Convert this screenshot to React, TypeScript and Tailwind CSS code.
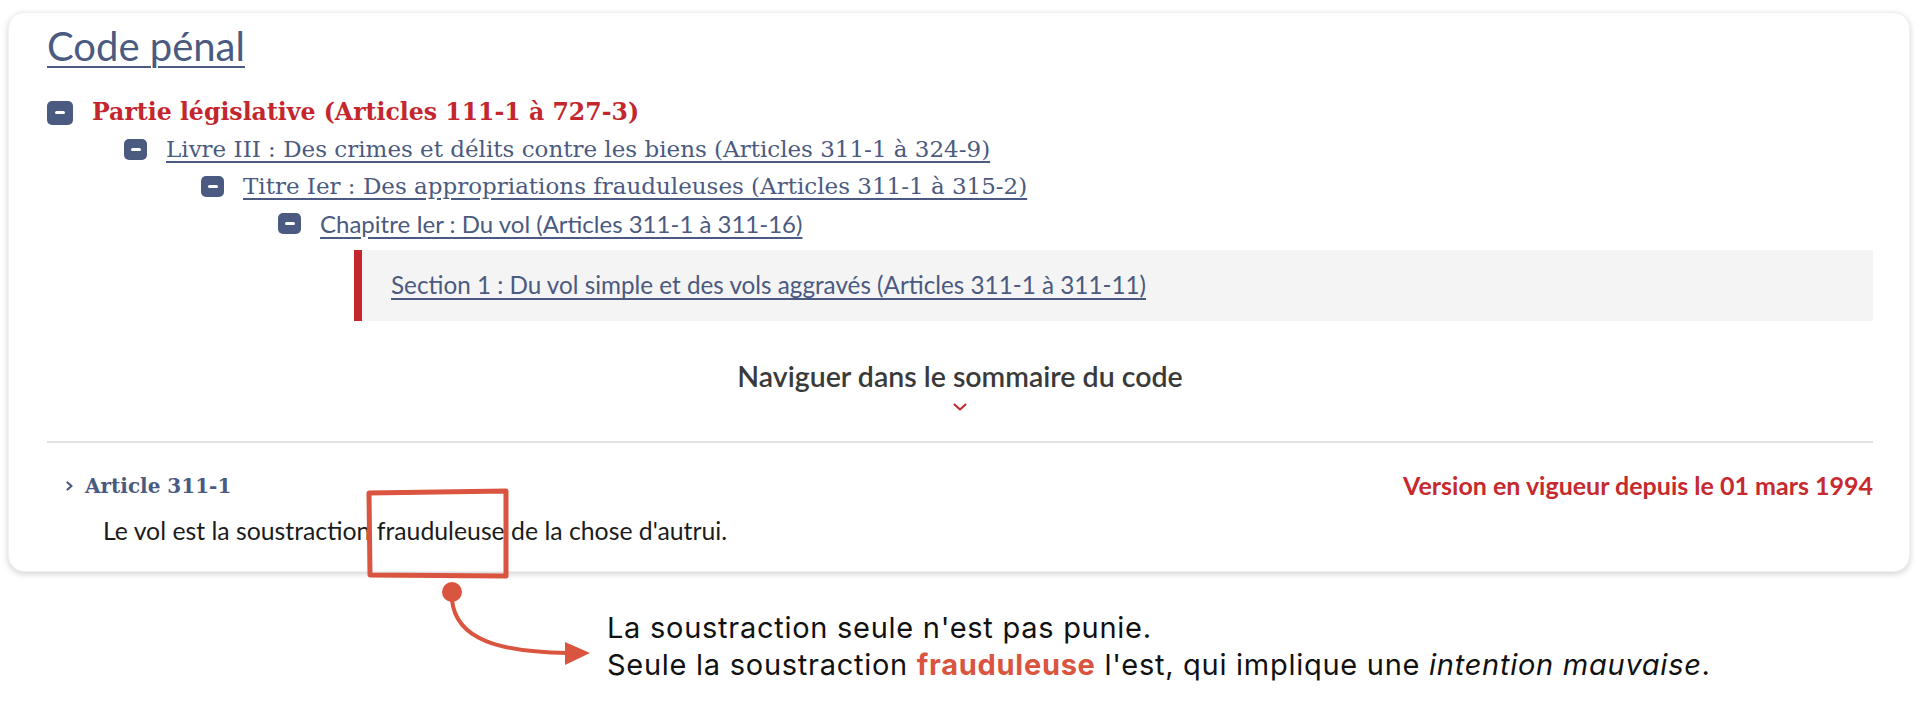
import React from "react";

const blue = "text-[#4b5a80]";

function MinusBox({ big = false }: { big?: boolean }) {
  return (
    <span
      className={
        big
          ? "flex shrink-0 items-center justify-center w-[26px] h-[24px] rounded-[5px] bg-[#4b5a80]"
          : "flex shrink-0 items-center justify-center w-[23px] h-[21px] rounded-[5px] bg-[#4b5a80]"
      }
    >
      <span className="w-[10px] h-[3px] rounded-full bg-white" />
    </span>
  );
}

interface rowProps {
  indent: string;
  big?: boolean;
  children: React.ReactNode;
}

function TreeRow({ indent, big, children }: rowProps) {
  return (
    <div className={`flex items-center gap-[19px] h-[37px] ${indent}`}>
      <MinusBox big={big} />
      {children}
    </div>
  );
}

function Annotation() {
  // hand drawn box + arrow lying over the card
  return (
    <svg
      className="absolute left-[355px] top-[482px] z-10 pointer-events-none"
      width="250"
      height="200"
      viewBox="0 0 250 200"
      fill="none"
    >
      <path
        d="M14 11 L151 9 L151 94 L15 93 Z"
        stroke="#d9553f"
        strokeWidth="5"
        strokeLinejoin="round"
      />
      <circle cx="97" cy="110" r="10" fill="#d9553f" />
      <path
        d="M97 118 C101 158, 145 170, 213 171"
        stroke="#d9553f"
        strokeWidth="4"
        strokeLinecap="round"
      />
      <path d="M210 160 L235 171 L210 183 Z" fill="#d9553f" />
    </svg>
  );
}

export default function App() {
  return (
    <div className="relative w-[1920px] h-[702px] bg-white overflow-hidden font-['Lato',sans-serif]">
      <div className="ml-2 mt-3 w-[1902px] h-[560px] rounded-[16px] bg-white border border-[#f0f0f0] shadow-[0_2px_6px_rgba(0,0,0,0.18)] pl-[38px] pr-[36px] pt-[11px]">
        <h1 className={`text-[40px] leading-[44px] ${blue} underline underline-offset-[5px] decoration-2`}>
          Code pénal
        </h1>

        <div className="mt-[26px] font-['DejaVu_Serif',serif]">
          <TreeRow indent="pl-0" big>
            <span className="text-[23.6px] font-bold text-[#c4262e]">
              Partie législative (Articles 111-1 à 727-3)
            </span>
          </TreeRow>
          <TreeRow indent="pl-[77px]">
            <a className={`text-[23px] ${blue} underline underline-offset-[4px]`}>
              Livre III : Des crimes et délits contre les biens (Articles 311-1 à 324-9)
            </a>
          </TreeRow>
          <TreeRow indent="pl-[154px]">
            <a className={`text-[23px] ${blue} underline underline-offset-[4px]`}>
              Titre Ier : Des appropriations frauduleuses (Articles 311-1 à 315-2)
            </a>
          </TreeRow>
          <TreeRow indent="pl-[231px]">
            <a className={`font-['Lato',sans-serif] text-[24px] ${blue} underline underline-offset-[4px]`}>
              Chapitre Ier : Du vol (Articles 311-1 à 311-16)
            </a>
          </TreeRow>
        </div>

        <div className="mt-2 ml-[307px] h-[71px] flex items-center bg-[#f4f4f4] border-l-[8px] border-[#c4262e] pl-[29px]">
          <a className={`text-[24.25px] ${blue} underline underline-offset-[4px]`}>
            Section 1 : Du vol simple et des vols aggravés (Articles 311-1 à 311-11)
          </a>
        </div>

        <div className="mt-[40px] flex flex-col items-center">
          <span className="text-[28.5px] leading-[30px] font-semibold text-[#3a3a3a]">
            Naviguer dans le sommaire du code
          </span>
          <svg className="mt-[12px]" width="14" height="8" viewBox="0 0 14 8" fill="none">
            <path d="M1.5 1.5 L7 6.5 L12.5 1.5" stroke="#c4262e" strokeWidth="2" strokeLinecap="round" strokeLinejoin="round" />
          </svg>
        </div>

        <div className="mt-[30px] h-[2px] bg-[#e2e2e2]" />

        <div className="mt-[28px] h-[30px] flex items-center justify-between">
          <div className="flex items-center gap-[12px] pl-[19px]">
            <svg width="7" height="10" viewBox="0 0 7 10" fill="none">
              <path d="M1.5 1.5 L5.5 5 L1.5 8.5" stroke="#4b5a80" strokeWidth="2.2" strokeLinecap="round" strokeLinejoin="round" />
            </svg>
            <span className={`font-['DejaVu_Serif',serif] text-[20px] font-bold ${blue}`}>
              Article 311-1
            </span>
          </div>
          <span className="text-[25px] font-bold text-[#c62a2f]">
            Version en vigueur depuis le 01 mars 1994
          </span>
        </div>

        <p className="mt-[16px] pl-[56px] text-[24.8px] leading-[28px] text-[#1c1c1c]">
          Le vol est la soustraction frauduleuse de la chose d'autrui.
        </p>
      </div>

      <div className="mt-[37px] pl-[607px] font-['Inter',sans-serif] text-[29px] leading-[37px] text-[#111] tracking-[0.025em]">
        <p>La soustraction seule n'est pas punie.</p>
        <p>
          Seule la soustraction <span className="font-bold text-[#d9553f]">frauduleuse</span> l'est, qui implique une{" "}
          <em>intention mauvaise</em>.
        </p>
      </div>

      <Annotation />
    </div>
  );
}
